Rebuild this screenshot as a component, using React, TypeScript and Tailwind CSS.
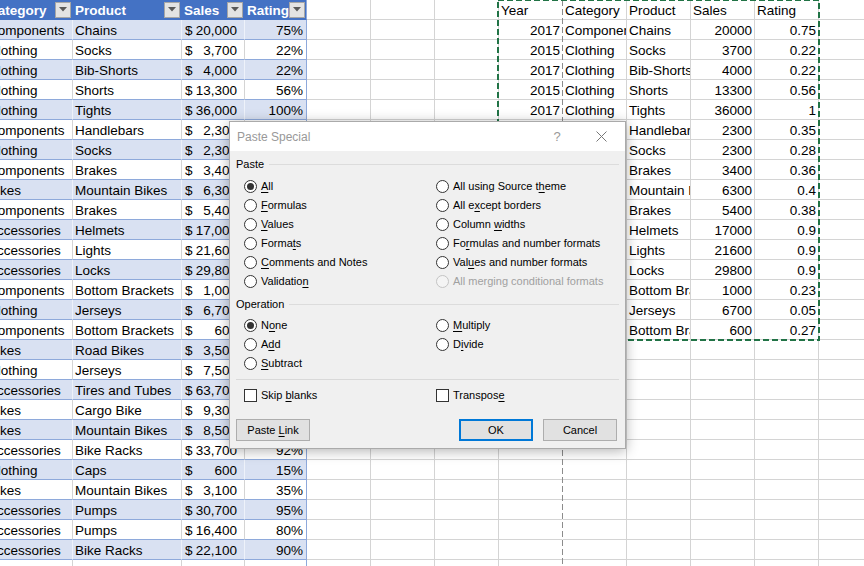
import React from "react";

const COLS = [87, 109, 63, 62, 64, 64, 64, 64, 64, 64, 64, 64, 64];
const ROWS = 29;

const left = [
  ["Components", "Chains", "20,000", "75%"],
  ["Clothing", "Socks", "3,700", "22%"],
  ["Clothing", "Bib-Shorts", "4,000", "22%"],
  ["Clothing", "Shorts", "13,300", "56%"],
  ["Clothing", "Tights", "36,000", "100%"],
  ["Components", "Handlebars", "2,300", "35%"],
  ["Clothing", "Socks", "2,300", "28%"],
  ["Components", "Brakes", "3,400", "36%"],
  ["Bikes", "Mountain Bikes", "6,300", "40%"],
  ["Components", "Brakes", "5,400", "38%"],
  ["Accessories", "Helmets", "17,000", "90%"],
  ["Accessories", "Lights", "21,600", "90%"],
  ["Accessories", "Locks", "29,800", "90%"],
  ["Components", "Bottom Brackets", "1,000", "23%"],
  ["Clothing", "Jerseys", "6,700", "5%"],
  ["Components", "Bottom Brackets", "600", "27%"],
  ["Bikes", "Road Bikes", "3,500", "60%"],
  ["Clothing", "Jerseys", "7,500", "45%"],
  ["Accessories", "Tires and Tubes", "63,700", "70%"],
  ["Bikes", "Cargo Bike", "9,300", "55%"],
  ["Bikes", "Mountain Bikes", "8,500", "65%"],
  ["Accessories", "Bike Racks", "33,700", "92%"],
  ["Clothing", "Caps", "600", "15%"],
  ["Bikes", "Mountain Bikes", "3,100", "35%"],
  ["Accessories", "Pumps", "30,700", "95%"],
  ["Accessories", "Pumps", "16,400", "80%"],
  ["Accessories", "Bike Racks", "22,100", "90%"],
  ["Clothing", "Socks", "4,200", "61%"],
];

const right = [
  ["Year", "Category", "Product", "Sales", "Rating"],
  ["2017", "Components", "Chains", "20000", "0.75"],
  ["2015", "Clothing", "Socks", "3700", "0.22"],
  ["2017", "Clothing", "Bib-Shorts", "4000", "0.22"],
  ["2015", "Clothing", "Shorts", "13300", "0.56"],
  ["2017", "Clothing", "Tights", "36000", "1"],
  ["2016", "Components", "Handlebars", "2300", "0.35"],
  ["2015", "Clothing", "Socks", "2300", "0.28"],
  ["2017", "Components", "Brakes", "3400", "0.36"],
  ["2016", "Bikes", "Mountain Bikes", "6300", "0.4"],
  ["2015", "Components", "Brakes", "5400", "0.38"],
  ["2017", "Accessories", "Helmets", "17000", "0.9"],
  ["2016", "Accessories", "Lights", "21600", "0.9"],
  ["2015", "Accessories", "Locks", "29800", "0.9"],
  ["2017", "Components", "Bottom Brackets", "1000", "0.23"],
  ["2016", "Clothing", "Jerseys", "6700", "0.05"],
  ["2015", "Components", "Bottom Brackets", "600", "0.27"],
];

const HEAD = ["Category", "Product", "Sales", "Rating"];

function FilterButton() {
  return (
    <div className="ml-auto mr-[1px] flex h-[16px] w-[16px] shrink-0 items-center justify-center border border-[#a6a6a6] bg-[#e3e3e3]">
      <svg width="8" height="5" viewBox="0 0 8 5">
        <polygon points="0,0 8,0 4,4.5" fill="#595959" />
      </svg>
    </div>
  );
}

function Cell({ r, c }: { r: number; c: number }) {
  const w = COLS[c];
  const base = "h-[20px] shrink-0 overflow-hidden whitespace-nowrap border-b border-r flex items-center";

  // left table
  if (c <= 3) {
    if (r === 0) {
      return (
        <div
          style={{ width: w }}
          className={`${base} bg-[#4472C4] border-b-[#4472C4] ${c === 3 ? "border-r-[#8EA9DB]" : "border-r-[#4472C4]"} pl-[2px] font-bold text-white`}
        >
          <span className="mt-[4px]">{HEAD[c]}</span>
          <FilterButton />
        </div>
      );
    }
    const row = left[r - 1];
    const band = r % 2 === 1;
    const bg = band ? "bg-[#D9E1F2]" : "bg-white";
    const br = c === 3 ? "border-r-[#8EA9DB]" : band ? "border-r-[#EEF2FA]" : "border-r-[#d4d4d4]";
    if (c === 2) {
      return (
        <div style={{ width: w }} className={`${base} ${bg} ${br} border-b-[#8EA9DB] justify-between pl-[3px] pr-[7px] pt-[4px]`}>
          <span>$</span>
          <span>{row[2]}</span>
        </div>
      );
    }
    return (
      <div
        style={{ width: w }}
        className={`${base} ${bg} ${br} border-b-[#8EA9DB] pt-[4px] ${c === 3 ? "justify-end pr-[3px]" : "pl-[2px]"}`}
      >
        {row[c]}
      </div>
    );
  }

  const pageBreak = c === 7 ? "border-r-transparent" : "border-r-[#d4d4d4]";

  // right table
  if (c >= 7 && c <= 11 && r <= 16) {
    const v = right[r][c - 7];
    const num = r > 0 && (c === 7 || c === 10 || c === 11);
    return (
      <div
        style={{ width: w }}
        className={`${base} bg-white border-b-[#d4d4d4] ${pageBreak} pt-[4px] ${num ? "justify-end pr-[2px]" : "pl-[2px]"}`}
      >
        {v}
      </div>
    );
  }

  return <div style={{ width: w }} className={`${base} bg-white border-b-[#d4d4d4] ${pageBreak}`} />;
}

type Opt = { pre: string; u?: string; post?: string; checked?: boolean; disabled?: boolean };

function Acc({ pre, u, post }: Opt) {
  return (
    <span>
      {pre}
      {u && <span className="underline decoration-1 underline-offset-[2px]">{u}</span>}
      {post}
    </span>
  );
}

function Radio(o: Opt) {
  return (
    <div className="flex h-[19px] items-center">
      <div
        className={`flex h-[13px] w-[13px] items-center justify-center rounded-full border ${o.disabled ? "border-[#c4c4c4] bg-[#f4f4f4]" : "border-[#333333] bg-white"}`}
      >
        {o.checked && <div className="h-[7px] w-[7px] rounded-full bg-[#333333]" />}
      </div>
      <div className={`ml-[4px] ${o.disabled ? "text-[#a0a0a0]" : "text-black"}`}>
        <Acc {...o} />
      </div>
    </div>
  );
}

function Check(o: Opt) {
  return (
    <div className="flex h-[19px] items-center">
      <div className="h-[13px] w-[13px] border border-[#333333] bg-white" />
      <div className="ml-[4px]">
        <Acc {...o} />
      </div>
    </div>
  );
}

function GroupHead({ label }: { label: string }) {
  return (
    <div className="flex h-[18px] items-center">
      <span>{label}</span>
      <div className="ml-[5px] h-px flex-1 bg-[#dcdcdc]" />
    </div>
  );
}

const pasteOpts: Opt[] = [
  { pre: "", u: "A", post: "ll", checked: true },
  { pre: "All using Source t", u: "h", post: "eme" },
  { pre: "", u: "F", post: "ormulas" },
  { pre: "All e", u: "x", post: "cept borders" },
  { pre: "", u: "V", post: "alues" },
  { pre: "Column ", u: "w", post: "idths" },
  { pre: "Forma", u: "t", post: "s" },
  { pre: "Fo", u: "r", post: "mulas and number formats" },
  { pre: "", u: "C", post: "omments and Notes" },
  { pre: "Val", u: "u", post: "es and number formats" },
  { pre: "Validatio", u: "n", post: "" },
  { pre: "All merging conditional formats", disabled: true },
];

const opOpts: (Opt | null)[] = [
  { pre: "N", u: "o", post: "ne", checked: true },
  { pre: "", u: "M", post: "ultiply" },
  { pre: "A", u: "d", post: "d" },
  { pre: "D", u: "i", post: "vide" },
  { pre: "", u: "S", post: "ubtract" },
  null,
];

function PasteSpecial() {
  return (
    <div className="absolute left-[229px] top-[121px] flex h-[328px] w-[397px] flex-col border border-[#aaaaaa] bg-[#f0f0f0] text-[11px] text-black shadow-[0_2px_12px_rgba(0,0,0,0.3)]">
      <div className="flex h-[29px] items-center bg-white pl-[7px] pr-[1px] text-[12px] text-[#999999]">
        <span>Paste Special</span>
        <span className="ml-auto w-[20px] text-center text-[13px]">?</span>
        <div className="ml-[11px] flex w-[46px] items-center justify-center">
          <svg width="11" height="11" viewBox="0 0 11 11">
            <path d="M0.5 0.5 L10.5 10.5 M10.5 0.5 L0.5 10.5" stroke="#777777" strokeWidth="1" />
          </svg>
        </div>
      </div>
      <div className="flex flex-1 flex-col px-[6px]">
        <div className="mt-[4px]">
          <GroupHead label="Paste" />
        </div>
        <div className="mt-[4px] grid grid-cols-[192px_1fr] pl-[8px]">
          {pasteOpts.map((o, i) => (
            <Radio key={i} {...o} />
          ))}
        </div>
        <div className="mt-[4px]">
          <GroupHead label="Operation" />
        </div>
        <div className="mt-[3px] grid grid-cols-[192px_1fr] pl-[8px]">
          {opOpts.map((o, i) => (o ? <Radio key={i} {...o} /> : <div key={i} />))}
        </div>
        <div className="mt-[6px] h-px bg-[#d9d9d9]" />
        <div className="mt-[6px] grid grid-cols-[192px_1fr] pl-[8px]">
          <Check pre="Skip " u="b" post="lanks" />
          <Check pre="Transpos" u="e" post="" />
        </div>
        <div className="mt-[14px] flex">
          <button className="flex h-[22px] w-[74px] items-center justify-center border border-[#adadad] bg-[#e1e1e1]">
            <Acc pre="Paste " u="L" post="ink" />
          </button>
          <button className="ml-auto flex h-[22px] w-[74px] items-center justify-center border-2 border-[#0078d7] bg-[#e1e1e1]">
            OK
          </button>
          <button className="ml-[10px] mr-[2px] flex h-[22px] w-[74px] items-center justify-center border border-[#adadad] bg-[#e1e1e1]">
            Cancel
          </button>
        </div>
      </div>
    </div>
  );
}

export default function App() {
  return (
    <div
      className="relative h-[566px] w-[864px] overflow-hidden bg-white text-[13.5px] text-black"
      style={{ fontFamily: '"Liberation Sans", Arial, sans-serif' }}
    >
      <div className="-ml-[14px] flex flex-col">
        {Array.from({ length: ROWS }).map((_, r) => (
          <div key={r} className="flex">
            {COLS.map((_, c) => (
              <Cell key={c} r={r} c={c} />
            ))}
          </div>
        ))}
      </div>

      {/* page break */}
      <svg className="absolute left-[562px] top-0" width="1" height="566">
        <line x1="0.5" y1="0" x2="0.5" y2="566" stroke="#8c8c8c" strokeWidth="1" strokeDasharray="6 3" />
      </svg>

      {/* copy marquee */}
      <svg className="absolute left-[497px] top-[-1px]" width="323" height="342">
        <rect x="1" y="1" width="321" height="340" fill="none" stroke="#217346" strokeWidth="2" strokeDasharray="6 3" />
      </svg>

      <PasteSpecial />
    </div>
  );
}
